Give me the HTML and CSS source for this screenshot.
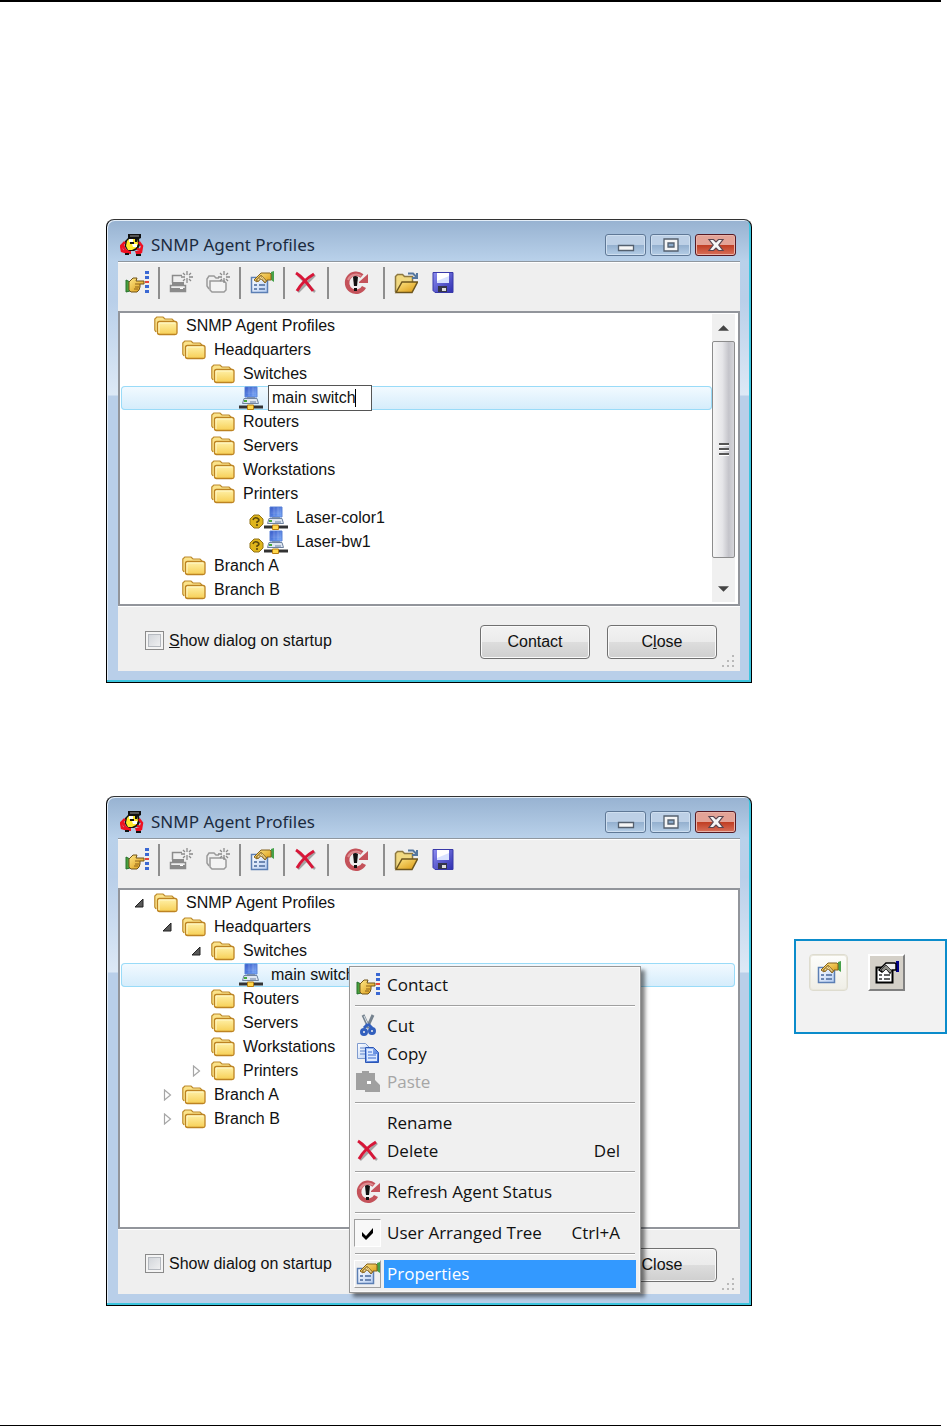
FILE: index.html
```html
<!DOCTYPE html>
<html lang="en">
<head>
    <meta charset="UTF-8">
    <meta name="viewport" content="width=device-width, initial-scale=1.0">
    <title>SNMP Agent Profiles</title>
    <link rel="stylesheet" href="styles.css">
</head>
<body>
    <!-- Shared icons -->
    <svg class="sprite" aria-hidden="true">
        <defs>
            <linearGradient id="gFolder" x1="0" y1="0" x2="0" y2="1"><stop offset="0" stop-color="#fff2ab"/><stop offset="1" stop-color="#f7cf55"/></linearGradient>
            <linearGradient id="gGold" x1="0" y1="0" x2="1" y2="1"><stop offset="0" stop-color="#ffe88a"/><stop offset="1" stop-color="#d9960c"/></linearGradient>
            <linearGradient id="gScreen" x1="0" y1="0" x2="1" y2="1"><stop offset="0" stop-color="#2448c4"/><stop offset="1" stop-color="#7fb0fb"/></linearGradient>
            <linearGradient id="gPaper" x1="0" y1="0" x2="1" y2="1"><stop offset="0" stop-color="#ffffff"/><stop offset="1" stop-color="#b5cdf3"/></linearGradient>
            <linearGradient id="gDisk" x1="0" y1="0" x2="1" y2="1"><stop offset="0" stop-color="#8d8df0"/><stop offset="1" stop-color="#2f2fb0"/></linearGradient>
            <linearGradient id="gBlue" x1="0" y1="0" x2="1" y2="1"><stop offset="0" stop-color="#a9c8fa"/><stop offset="1" stop-color="#3565cf"/></linearGradient>

            <symbol id="app" viewBox="0 0 24 24">
                <path d="M8 1h13v4l-2 1 1 6-2 4-4 2H8l-3-4V8l3-3z" fill="#111"/>
                <path d="M7 8l2-2h8l1 5-2 4-4 2H8l-2-4z" fill="#ffe92e"/>
                <path d="M9 6h4v3H9zM12 11h5v3h-4z" fill="#fff"/>
                <path d="M10 2h9v2h-9z" fill="#555"/>
                <path d="M10 9h4v2h-4zM15 6h2v3h-2z" fill="#111"/>
                <path d="M5 9L1 13l1 5 3 1 1-3M3 12l2 5 4 2M19 9l3 4-1 4-4-1M22 13l-1 6-4 1" fill="none" stroke="#ee1122" stroke-width="2.500"/>
                <path d="M7 18h4v3H6zM15 18h5l1 3h-5z" fill="#ee1122"/>
                <path d="M5 20h4v2H5zM16 21h5v2h-5z" fill="#111"/>
            </symbol>

            <symbol id="contact" viewBox="0 0 24 24">
                <path d="M1 9l4 2v9l-4 1z" fill="#49a03d" stroke="#25712b"/>
                <path d="M4 11l4-4h4l-1 3h8v3h-4v3l-1 3-2 2H6l-2-2z" fill="url(#gGold)" stroke="#71541b"/>
                <path d="M10 13h5M10 16h4M9 18h4" stroke="#91651a"/>
                <path d="M20 0h4v3h-4zM20 5h4v3h-4zM20 14h4v3h-4zM20 19h4v3h-4z" fill="#3a68d3"/>
                <path d="M20 10h4v2h-4z" fill="#e5443d"/>
            </symbol>

            <symbol id="newAgent" viewBox="0 0 24 24">
                <path d="M3.500 12V4.500H13M1.500 14.500h15v6h-15z" fill="none" stroke="#8b8b8b" stroke-width="1.500"/>
                <path d="M2 17h14v3H2zM3 11h12v3H3z" fill="#8b8b8b"/><path d="M11 17h3v1h-3z" fill="#fff"/>
                <path d="M18 0v4M18 7v5M12 6h4M20 6h4M14 2l2 2M22 2l-2 2M14 10l2-2M22 10l-2-2" stroke="#8b8b8b" stroke-width="1.300"/>
            </symbol>

            <symbol id="newFolder" viewBox="0 0 24 24">
                <path d="M3 18L1 15V8l2-3h5l2 2h3" fill="none" stroke="#9a9a9a" stroke-width="1.500"/>
                <path d="M4 10h14l2 2v7l-2 2H6l-2-2z" fill="#f4f4f4" stroke="#9a9a9a" stroke-width="1.500"/>
                <path d="M18 0v4M18 7v5M12 6h4M20 6h4M14 2l2 2M22 2l-2 2M14 10l2-2M22 10l-2-2" stroke="#8b8b8b" stroke-width="1.300"/>
            </symbol>

            <symbol id="properties" viewBox="0 0 24 24">
                <path d="M1.500 6.500h16v15h-16z" fill="url(#gPaper)" stroke="#5c7fb4" stroke-width="1.500"/>
                <path d="M4 14h3M4 18h3M9 14h6M9 18h6" stroke="#6c87b2" stroke-width="2"/>
                <path d="M21 1l3-1v11l-3-2z" fill="#46a14a"/>
                <path d="M4 9l7-7h9l1 1v6h-4l-2 3-4-5-4 4z" fill="url(#gGold)" stroke="#82601d"/>
                <path d="M6 9l5-5 6 6-2 2-4-4-3 3z" fill="#b99a55" stroke="#82601d" stroke-width=".6"/>
                <path d="M8 8l1 1M10 6l2 2M12 6l3 4" stroke="#f5dc95"/>
            </symbol>

            <symbol id="propertiesOld" viewBox="0 0 24 24">
                <path d="M1.500 6.500h16v15h-16z" fill="#fff" stroke="#000" stroke-width="2"/>
                <path d="M4 14h3M4 18h3M9 14h6M9 18h6" stroke="#333" stroke-width="1.500"/>
                <path d="M21 0h3v11h-3z" fill="#00008b"/>
                <path d="M4 9l7-7h9l1 1v6h-4l-2 3-4-5-4 4z" fill="#eee" stroke="#000" stroke-width="1.500"/>
                <path d="M6 9l5-5 6 6-2 2-4-4-3 3z" fill="#8f8f88" stroke="#222" stroke-width=".8"/>
            </symbol>

            <symbol id="delete" viewBox="0 0 24 24">
                <path d="M4 4l17 17M21 4L4 21" stroke="#a4a4a4" stroke-width="2.500"/>
                <path d="M2 2c5 3 12 11 17 18M20 3C13 7 7 13 3 20" fill="none" stroke="#d81638" stroke-width="3"/>
            </symbol>

            <symbol id="refresh" viewBox="0 0 24 24">
                <path d="M18 5A9 9 0 1 0 20 16" fill="none" stroke="#c4525a" stroke-width="4.500"/>
                <path d="M17 5A9 9 0 0 0 4 9" fill="none" stroke="#dd8b8f" stroke-width="2"/>
                <path d="M15 11l9-8v9h-9z" fill="#c4525a"/>
                <path d="M9 6q2-2 5 0l-1 9h-3z" fill="#111"/><path d="M10 17h3v3h-3z" fill="#111"/>
            </symbol>

            <symbol id="open" viewBox="0 0 24 24">
                <path d="M1.500 21V5.500l2-2h5l2 2h8V12" fill="#f1d981" stroke="#8d7840" stroke-width="1.500"/>
                <path d="M2 21.500L8 11h15.500l-5.500 10.500z" fill="url(#gGold)" stroke="#6e561d" stroke-width="1.500"/>
                <path d="M14 2.500h5l3 3M23 2v5h-5" fill="none" stroke="#55779f" stroke-width="2"/>
            </symbol>

            <symbol id="save" viewBox="0 0 24 24">
                <path d="M2 1.500h20v20H4l-2-2z" fill="url(#gDisk)" stroke="#3939a8"/>
                <path d="M6 2h12v10H6z" fill="#fff"/><path d="M6 10l12-5v7H6z" fill="#d9e2ff"/>
                <path d="M7 15h9v6H7z" fill="#35354a"/><path d="M11 17h4v3h-4z" fill="#ddd"/>
            </symbol>

            <symbol id="folder" viewBox="0 0 24 24">
                <path d="M2 18L.8 16V5l2-2H9l2 2h7l2 2v3" fill="#fbe38a" stroke="#bd8a2b" stroke-width="1.200"/>
                <path d="M3.500 9.500q0-2 2-2h15.500q2 0 2 2V19q0 1.500-2 1.500H5.500q-2 0-2-2z" fill="url(#gFolder)" stroke="#bd8322" stroke-width="1.300"/>
                <path d="M5 19V9h16" fill="none" stroke="#fff8c9"/>
            </symbol>

            <symbol id="device" viewBox="0 0 24 24">
                <path d="M6 1h12v10H6z" fill="url(#gScreen)" stroke="#5d83d6"/>
                <path d="M7 3h10M7 5h10M7 7h10M10 1v9M14 1v9" stroke="#fff" stroke-opacity=".18"/>
                <path d="M8 11h8v2H8z" fill="#8093ae"/>
                <path d="M5 12.500h13l1.500 5h-16z" fill="#dfe7f2" stroke="#6f83a0"/>
                <path d="M5 14h3v2H5z" fill="#45a83d"/><path d="M11 16h6" stroke="#6a7fa0"/>
                <path d="M0 21h24" stroke="#333" stroke-width="3"/>
                <path d="M8.500 19h6v4.500h-6z" fill="#ffd84c" stroke="#b67d12"/>
            </symbol>

            <symbol id="unknown" viewBox="0 0 25 24">
                <path d="M15 9h5l4 4v5l-4 4h-5l-4-4v-5z" fill="#dfb51c" stroke="#927216"/>
                <path d="M14 14q1-3 4-2 4 2 0 4v1M18 18v2" fill="none" stroke="#5c490c" stroke-width="1.600"/>
            </symbol>

            <symbol id="cut" viewBox="0 0 24 24">
                <path d="M7 1l6 13M17 1l-6 13" stroke="#76838f" stroke-width="3"/>
                <path d="M8 2l5 11" stroke="#dbe2ea"/>
                <path d="M12 10l4 4M12 10l-4 4" stroke="#325fbd" stroke-width="3"/>
                <circle cx="8" cy="18" r="2.500" fill="none" stroke="#325fbd" stroke-width="3"/>
                <circle cx="16" cy="17" r="2.500" fill="none" stroke="#325fbd" stroke-width="3"/>
            </symbol>

            <symbol id="copy" viewBox="0 0 24 24">
                <path d="M1.500 1.500h8l4 4v11h-12z" fill="url(#gPaper)" stroke="#7f9bcf"/>
                <path d="M4 6h5M4 9h6M4 12h5" stroke="#5c83cb"/>
                <path d="M9.500 5.500h8l5 5v10h-13z" fill="url(#gBlue)" stroke="#2b55b4"/>
                <path d="M11 7h6v5h4v7H11z" fill="#dce9ff"/>
                <path d="M12 10h4M12 13h8M12 16h8" stroke="#386bd0"/>
            </symbol>

            <symbol id="paste" viewBox="0 0 24 24">
                <path d="M0 3h6V1h7v2h6v7l5 5v7H9v-2H0z" fill="#a0a0a0"/><path d="M11 11h4v3h-4z" fill="#fff"/>
            </symbol>

            <symbol id="check" viewBox="0 0 24 24">
                <path d="M6 11l4 4 7-8v5l-7 7-4-4z" fill="#000"/>
            </symbol>

            <symbol id="opened" viewBox="0 0 12 12"><path d="M10 2v8H2z" fill="#595959" stroke="#222"/></symbol>
            <symbol id="closed" viewBox="0 0 12 12"><path d="M3.500 1l6 5-6 5z" fill="#fff" stroke="#a6a6a6" stroke-width="1.200"/></symbol>

            <symbol id="grip" viewBox="0 0 12 12">
                <path d="M10 0h2v2h-2zM5 5h2v2H5zM10 5h2v2h-2zM0 10h2v2H0zM5 10h2v2H5zM10 10h2v2h-2z" fill="#b9b9b9"/>
            </symbol>

            <symbol id="min" viewBox="0 0 20 16"><path d="M2.500 8.500h15v5h-15z" fill="#f6f6f6" stroke="#54606f" stroke-width="1.300"/></symbol>
            <symbol id="max" viewBox="0 0 20 16">
                <path d="M3 2h14v12H3z" fill="#f6f6f6" stroke="#54606f" stroke-width="1.300"/>
                <path d="M7 6h6v4H7z" fill="#8ba9c9" stroke="#54606f" stroke-width="1.300"/>
            </symbol>
            <symbol id="close" viewBox="0 0 20 16">
                <path d="M3 2.500h4.500L10 5l2.500-2.500H17L12.800 8l4.200 5.500h-4.500L10 11l-2.500 2.500H3L7.200 8z" fill="#f6f6f6" stroke="#5a4650" stroke-width="1.200"/>
            </symbol>
        </defs>
    </svg>

    <hr class="rule rule-top">

    <main>
        <section class="figure">
            <div class="window">
                <div class="titlebar">
                    <svg class="icon"><use href="#app"/></svg>
                    <h2>SNMP Agent Profiles</h2>
                    <button class="caption" aria-label="Minimize"><svg><use href="#min"/></svg></button>
                    <button class="caption" aria-label="Maximize"><svg><use href="#max"/></svg></button>
                    <button class="caption caption-close" aria-label="Close window"><svg><use href="#close"/></svg></button>
                </div>
                <div class="toolbar">
                    <button aria-label="Contact"><svg class="icon"><use href="#contact"/></svg></button>
                    <span class="divider"></span>
                    <button aria-label="New agent"><svg class="icon"><use href="#newAgent"/></svg></button>
                    <button aria-label="New folder"><svg class="icon"><use href="#newFolder"/></svg></button>
                    <span class="divider"></span>
                    <button aria-label="Properties"><svg class="icon"><use href="#properties"/></svg></button>
                    <span class="divider"></span>
                    <button aria-label="Delete"><svg class="icon"><use href="#delete"/></svg></button>
                    <span class="divider"></span>
                    <button class="wide" aria-label="Refresh"><svg class="icon"><use href="#refresh"/></svg></button>
                    <span class="divider"></span>
                    <button aria-label="Open"><svg class="icon"><use href="#open"/></svg></button>
                    <button aria-label="Save"><svg class="icon"><use href="#save"/></svg></button>
                </div>
                <div class="tree">
                    <ul>
                        <li><span class="expander"></span><svg class="icon"><use href="#folder"/></svg><span>SNMP Agent Profiles</span></li>
                        <li class="level-1"><span class="expander"></span><svg class="icon"><use href="#folder"/></svg><span>Headquarters</span></li>
                        <li class="level-2"><span class="expander"></span><svg class="icon"><use href="#folder"/></svg><span>Switches</span></li>
                        <li class="level-3 selected"><span class="expander"></span><svg class="icon"><use href="#device"/></svg><span class="rename"><input type="text" value="main switch" aria-label="Agent name"><span class="caret"></span></span></li>
                        <li class="level-2"><span class="expander"></span><svg class="icon"><use href="#folder"/></svg><span>Routers</span></li>
                        <li class="level-2"><span class="expander"></span><svg class="icon"><use href="#folder"/></svg><span>Servers</span></li>
                        <li class="level-2"><span class="expander"></span><svg class="icon"><use href="#folder"/></svg><span>Workstations</span></li>
                        <li class="level-2"><span class="expander"></span><svg class="icon"><use href="#folder"/></svg><span>Printers</span></li>
                        <li class="level-3"><span class="expander"></span><svg class="state"><use href="#unknown"/></svg><svg class="icon"><use href="#device"/></svg><span>Laser-color1</span></li>
                        <li class="level-3"><span class="expander"></span><svg class="state"><use href="#unknown"/></svg><svg class="icon"><use href="#device"/></svg><span>Laser-bw1</span></li>
                        <li class="level-1"><span class="expander"></span><svg class="icon"><use href="#folder"/></svg><span>Branch A</span></li>
                        <li class="level-1"><span class="expander"></span><svg class="icon"><use href="#folder"/></svg><span>Branch B</span></li>
                    </ul>
                    <div class="scrollbar">
                        <button class="arrow" aria-label="Scroll up"><svg viewBox="0 0 12 6"><path d="M6 0l6 6H0z" fill="#444"/></svg></button>
                        <div class="thumb"><i></i><i></i><i></i></div>
                        <button class="arrow" aria-label="Scroll down"><svg viewBox="0 0 12 6"><path d="M0 0h12L6 6z" fill="#444"/></svg></button>
                    </div>
                </div>
                <div class="footer">
                    <input type="checkbox" id="startup1">
                    <label for="startup1"><u>S</u>how dialog on startup</label>
                    <button class="push">Contact</button>
                    <button class="push">C<u>l</u>ose</button>
                    <svg class="grip"><use href="#grip"/></svg>
                </div>
            </div>
        </section>

        <section class="figure">
            <div class="window">
                <div class="titlebar">
                    <svg class="icon"><use href="#app"/></svg>
                    <h2>SNMP Agent Profiles</h2>
                    <button class="caption" aria-label="Minimize"><svg><use href="#min"/></svg></button>
                    <button class="caption" aria-label="Maximize"><svg><use href="#max"/></svg></button>
                    <button class="caption caption-close" aria-label="Close window"><svg><use href="#close"/></svg></button>
                </div>
                <div class="toolbar">
                    <button aria-label="Contact"><svg class="icon"><use href="#contact"/></svg></button>
                    <span class="divider"></span>
                    <button aria-label="New agent"><svg class="icon"><use href="#newAgent"/></svg></button>
                    <button aria-label="New folder"><svg class="icon"><use href="#newFolder"/></svg></button>
                    <span class="divider"></span>
                    <button aria-label="Properties"><svg class="icon"><use href="#properties"/></svg></button>
                    <span class="divider"></span>
                    <button aria-label="Delete"><svg class="icon"><use href="#delete"/></svg></button>
                    <span class="divider"></span>
                    <button class="wide" aria-label="Refresh"><svg class="icon"><use href="#refresh"/></svg></button>
                    <span class="divider"></span>
                    <button aria-label="Open"><svg class="icon"><use href="#open"/></svg></button>
                    <button aria-label="Save"><svg class="icon"><use href="#save"/></svg></button>
                </div>
                <div class="tree tree-tall">
                    <ul>
                        <li><svg class="expander"><use href="#opened"/></svg><svg class="icon"><use href="#folder"/></svg><span>SNMP Agent Profiles</span></li>
                        <li class="level-1"><svg class="expander"><use href="#opened"/></svg><svg class="icon"><use href="#folder"/></svg><span>Headquarters</span></li>
                        <li class="level-2"><svg class="expander"><use href="#opened"/></svg><svg class="icon"><use href="#folder"/></svg><span>Switches</span></li>
                        <li class="level-3 selected"><span class="expander"></span><svg class="icon"><use href="#device"/></svg><span>main switch</span></li>
                        <li class="level-2"><span class="expander"></span><svg class="icon"><use href="#folder"/></svg><span>Routers</span></li>
                        <li class="level-2"><span class="expander"></span><svg class="icon"><use href="#folder"/></svg><span>Servers</span></li>
                        <li class="level-2"><span class="expander"></span><svg class="icon"><use href="#folder"/></svg><span>Workstations</span></li>
                        <li class="level-2"><svg class="expander"><use href="#closed"/></svg><svg class="icon"><use href="#folder"/></svg><span>Printers</span></li>
                        <li class="level-1"><svg class="expander"><use href="#closed"/></svg><svg class="icon"><use href="#folder"/></svg><span>Branch A</span></li>
                        <li class="level-1"><svg class="expander"><use href="#closed"/></svg><svg class="icon"><use href="#folder"/></svg><span>Branch B</span></li>
                    </ul>
                </div>
                <div class="footer">
                    <input type="checkbox" id="startup2">
                    <label for="startup2">Show dialog on startup</label>
                    <button class="push">Close</button>
                    <svg class="grip"><use href="#grip"/></svg>
                </div>

                <!-- Context menu -->
                <div class="menu">
                    <button><span class="slot"><svg class="icon"><use href="#contact"/></svg></span><span class="text">Contact</span></button>
                    <hr>
                    <button><span class="slot"><svg class="icon"><use href="#cut"/></svg></span><span class="text">Cut</span></button>
                    <button><span class="slot"><svg class="icon"><use href="#copy"/></svg></span><span class="text">Copy</span></button>
                    <button disabled><span class="slot"><svg class="icon"><use href="#paste"/></svg></span><span class="text">Paste</span></button>
                    <hr>
                    <button><span class="slot"></span><span class="text">Rename</span></button>
                    <button><span class="slot"><svg class="icon"><use href="#delete"/></svg></span><span class="text">Delete<kbd>Del</kbd></span></button>
                    <hr>
                    <button><span class="slot"><svg class="icon"><use href="#refresh"/></svg></span><span class="text">Refresh Agent Status</span></button>
                    <hr>
                    <button><span class="slot slot-checked"><svg class="icon"><use href="#check"/></svg></span><span class="text">User Arranged Tree<kbd>Ctrl+A</kbd></span></button>
                    <hr>
                    <button class="active"><span class="slot slot-raised"><svg class="icon"><use href="#properties"/></svg></span><span class="text">Properties</span></button>
                </div>
            </div>

            <aside class="note">
                <button class="tool-new" aria-label="Properties"><svg class="icon"><use href="#properties"/></svg></button>
                <button class="tool-old" aria-label="Properties (classic)"><svg class="icon"><use href="#propertiesOld"/></svg></button>
            </aside>
        </section>
    </main>

    <hr class="rule rule-bottom">
</body>
</html>
```
FILE: styles.css
```css
* {
    box-sizing: border-box;
}

body {
    margin: 0;
    background-color: #fff;
    color: #111;
    font-family: "Liberation Sans", Arial, sans-serif;
    font-size: 16px;
    line-height: 24px;
}

button {
    margin: 0;
    padding: 0;
    border: none;
    background: none;
    color: inherit;
    font: inherit;
}

.sprite {
    display: block;
    width: 0;
    height: 0;
}

.icon {
    flex: none;
    display: block;
    width: 24px;
    height: 24px;
}

.rule {
    margin: 0 6px 0 0;
    border: none;
    background-color: #000;
}

.rule-top {
    height: 2px;
}

.rule-bottom {
    height: 1px;
}

main {
    display: grid;
    gap: 113px;
    padding: 217px 0 119px 106px;
}

.figure {
    display: grid;
    grid-template-columns: minmax(0, 1fr) 153px;
    column-gap: 42px;
    align-items: start;
}

/* Window frame */
.window {
    position: relative;
    padding: 0 11px 11px;
    border: 1px solid #000;
    border-top-color: #333;
    border-radius: 8px 8px 0 0;
    background: linear-gradient(#97b2d1, #b9d1ea 41px, #b9cfe9 80px, #dde9f6 175px, #b9cfe9 176px);
    box-shadow: inset -2px -2px 0 #3cc4dd, inset 1px 1px 0 #e4eef8;
}

.titlebar {
    display: flex;
    align-items: center;
    gap: 4px;
    height: 41px;
    padding: 10px 4px 2px 2px;
}

.titlebar h2 {
    flex: 1;
    margin: 0 0 0 3px;
    color: #1b2b40;
    font-family: "Noto Sans", "Open Sans", sans-serif;
    font-size: 17px;
    font-weight: 400;
}

.caption {
    display: grid;
    place-items: center;
    width: 41px;
    height: 22px;
    border: 1px solid #5f7896;
    border-radius: 3px;
    background: linear-gradient(#bdd0e6 50%, #93afce 50%, #b4cde6);
    box-shadow: inset 0 0 0 1px #cfdff0;
}

.caption svg {
    width: 20px;
    height: 16px;
}

.caption-close {
    border-color: #571a24;
    background: linear-gradient(#e3a397 50%, #bf3c22 50%, #d8705a);
    box-shadow: inset 0 0 0 1px #e9b3a8;
}

.toolbar {
    display: flex;
    gap: 1px;
    height: 50px;
    padding: 5px 0 0 1px;
    border-top: 1px solid #8f979f;
    background-color: #efefef;
    box-shadow: inset 0 1px 0 #fff;
}

.toolbar button {
    display: grid;
    place-items: center;
    width: 36px;
    height: 32px;
}

.toolbar .wide {
    width: 48px;
}

.divider {
    width: 6px;
    height: 32px;
    background: linear-gradient(#8e8e8e, #8e8e8e) center / 2px 100% no-repeat;
}

/* Profile tree */
.tree {
    display: flex;
    padding: 1px 3px 2px 1px;
    border: 2px solid #92959b;
    background-color: #fff;
}

.tree-tall {
    min-height: 341px;
}

.tree ul {
    flex: 1;
    margin: 0;
    padding: 0;
    list-style-type: none;
}

.tree li {
    display: flex;
    align-items: center;
    height: 24px;
    padding-left: 12px;
    white-space: nowrap;
}

.tree .level-1 {
    padding-left: 40px;
}

.tree .level-2 {
    padding-left: 69px;
}

.tree .level-3 {
    padding-left: 97px;
}

.tree li .icon {
    margin-right: 8px;
}

.tree .selected {
    border-radius: 4px;
    background: linear-gradient(#f3faff, #d4ecfb);
    box-shadow: inset 0 0 0 1px #99dbf8;
}

.expander {
    flex: none;
    width: 12px;
    height: 12px;
    margin-right: 9px;
}

.state {
    flex: none;
    width: 25px;
    height: 24px;
}

.rename {
    position: relative;
    margin-left: -3px;
}

.rename input {
    display: block;
    width: 104px;
    height: 26px;
    padding: 0 3px;
    border: 1px solid #555;
    background-color: #fff;
    color: inherit;
    font: inherit;
}

.caret {
    position: absolute;
    top: 4px;
    left: 87px;
    width: 1px;
    height: 18px;
    background-color: #000;
}

.scrollbar {
    display: flex;
    flex-direction: column;
    width: 23px;
    background-color: #f0f0f0;
}

.arrow {
    display: grid;
    place-items: center;
    height: 27px;
}

.arrow svg {
    width: 11px;
    height: 6px;
}

.thumb {
    flex: 1;
    display: grid;
    align-content: center;
    justify-content: center;
    gap: 2px;
    margin-bottom: 17px;
    border: 1px solid #8c8c8c;
    border-radius: 2px;
    background: linear-gradient(to right, #f6f6f6, #e5e5e8 45%, #c4c4ca 75%, #d6d6da);
}

.thumb i {
    width: 10px;
    height: 3px;
    border-bottom: 1px solid #fff;
    background-color: #555;
}

.footer {
    display: flex;
    align-items: flex-start;
    height: 65px;
    padding: 19px 6px 0 27px;
    background-color: #efefef;
    box-shadow: inset 0 1px 0 #fff;
}

.footer input {
    appearance: none;
    width: 19px;
    height: 19px;
    margin: 6px 5px 0 0;
    border: 1px solid #8a8a8a;
    background: linear-gradient(135deg, #cbcfd5, #f6f6f6);
    box-shadow: inset 0 0 0 2px #f4f4f4, inset 0 0 0 3px #b5b9bf;
}

.footer label {
    flex: 1;
    margin-top: 4px;
}

.push {
    width: 110px;
    height: 34px;
    margin-right: 17px;
    border: 1px solid #707070;
    border-radius: 4px;
    background: linear-gradient(#f2f2f2, #ebebeb 50%, #dddddd 50%, #cfcfcf);
    box-shadow: inset 0 0 0 1px #fafafa;
}

.push:last-of-type {
    margin-right: 5px;
}

.grip {
    align-self: flex-end;
    width: 12px;
    height: 12px;
    margin-bottom: 4px;
}

/* Context menu */
.menu {
    position: absolute;
    top: 169px;
    left: 242px;
    width: 292px;
    padding: 4px;
    border: 1px solid #979797;
    background-color: #f0f0f0;
    box-shadow: inset 0 0 0 1px #f8f8f8, 4px 4px 4px rgba(0, 0, 0, 0.5);
    font-family: "Open Sans", "Noto Sans", sans-serif;
    font-size: 17px;
}

.menu button {
    display: flex;
    gap: 3px;
    width: 100%;
    height: 28px;
    text-align: left;
}

.menu button:disabled {
    color: #a6a6a6;
}

.menu hr {
    height: 2px;
    margin: 6px 1px 5px;
    border: none;
    border-top: 1px solid #a0a0a0;
    border-bottom: 1px solid #fff;
}

.slot {
    display: grid;
    place-items: center;
    width: 27px;
    height: 28px;
}

.slot-checked {
    border: 1px solid;
    border-color: #a0a0a0 #fff #fff #a0a0a0;
    background-color: #f8f8f8;
}

.slot-raised {
    border: 1px solid;
    border-color: #fff #a0a0a0 #a0a0a0 #fff;
}

.text {
    flex: 1;
    display: flex;
    justify-content: space-between;
    padding: 0 16px 0 3px;
    line-height: 28px;
}

.text kbd {
    font: inherit;
}

.active .text {
    background-color: #3399ff;
    color: #fff;
}

/* Toolbar button in both icon styles */
.note {
    display: flex;
    gap: 20px;
    height: 95px;
    margin-top: 143px;
    padding: 13px;
    border: 2px solid #0b8ccb;
    background-color: #f2f2f2;
}

.note button {
    display: grid;
    place-items: center;
    height: 37px;
}

.note .tool-new {
    width: 39px;
    border: 1px solid #dedccf;
    border-radius: 4px;
    background: linear-gradient(#fdfdfb, #efeee6);
    box-shadow: inset 0 0 0 1px #e9e7dc;
}

.note .tool-old {
    width: 37px;
    border: 2px solid;
    border-color: #fff #808080 #808080 #fff;
    background-color: #d4d0c8;
}
```
